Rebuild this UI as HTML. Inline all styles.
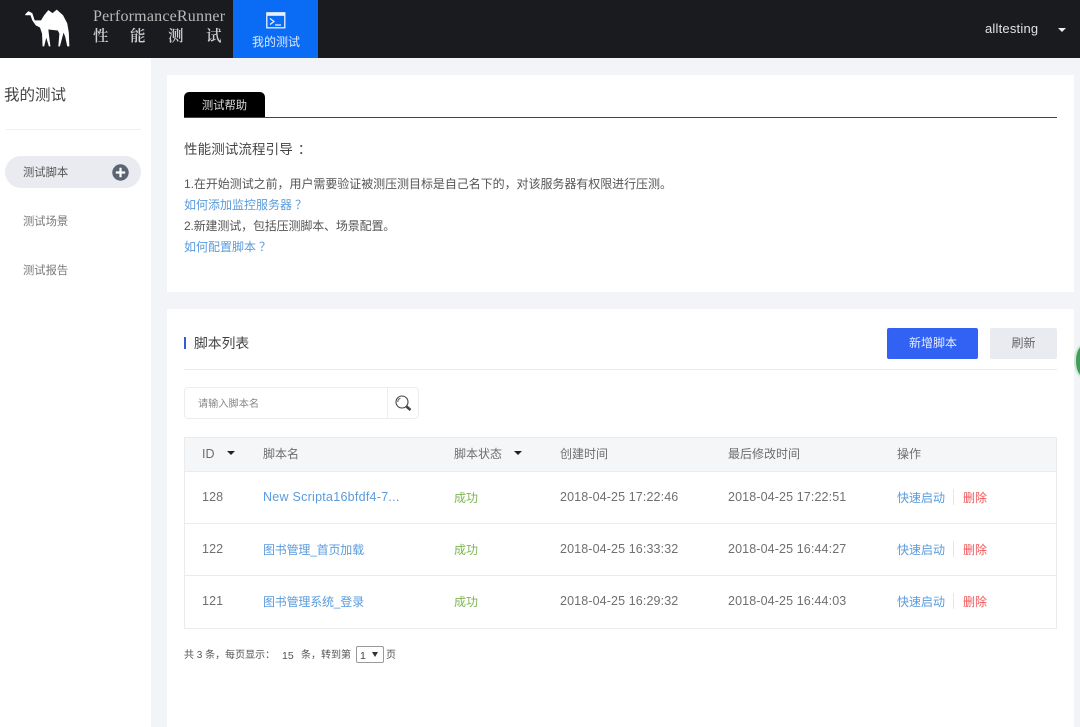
<!DOCTYPE html>
<html lang="zh"><head><meta charset="utf-8"><title>PerformanceRunner</title>
<style>
html,body{margin:0;padding:0;width:1080px;height:727px;overflow:hidden;background:#f3f4f7}
body{position:relative;font-family:"Liberation Sans","Noto Sans CJK SC",sans-serif;color:#555;font-size:12px;filter:blur(.3px)}
.a{position:absolute;white-space:nowrap}
.t{line-height:16px;height:16px}
.lnk{color:#5a9bdc}
.g{color:#7db552}
.r{color:#f0555a}
.hd{color:#6e6e6e}
.d{font-size:12.500px;color:#707070;letter-spacing:.12px}
.line{position:absolute;background:#eaebee;height:1px}
.tri{position:absolute;width:0;height:0;border-left:4px solid transparent;border-right:4px solid transparent;border-top:4px solid #222}
.s{font:600 15.500px/20px 'Liberation Serif','Noto Serif CJK SC',serif;color:#cfcfcf;top:27px}
.p{font-size:10px;line-height:14px;color:#555;top:649px}
</style></head><body>
<div class="a" style="left:0;top:0;width:1080px;height:58px;background:#191b1e"></div>
<svg class="a" style="left:20px;top:5px" width="63" height="47" viewBox="0 0 60 46" preserveAspectRatio="none"><path fill="#fff" d="M5 9 L8 6 L11.700 8 L14 15 L20 15 L23 10 L27 5 L31 8 L35 4.500 L41 10 L45 18 L46.500 27 L47 40.500 L45 40.500 L43 31 L41.500 27 L38 40.500 L36.500 40.500 L37.500 28 L36 25 L27 24 L28 33 L29 40.500 L27.500 40.500 L25 32 L23 40.500 L21.500 40.500 L21 28 L19 22 L15 20 L11.700 15 L10 10 L5 10 Z"/></svg>
<div class="a" style="left:93px;top:8px;font:16px/18px 'Liberation Serif','Noto Serif CJK SC',serif;color:#b9b9b9;letter-spacing:.2px">PerformanceRunner</div>
<div class="a s" style="left:93px">性</div>
<div class="a s" style="left:130px">能</div>
<div class="a s" style="left:168px">测</div>
<div class="a s" style="left:206px">试</div>
<div class="a" style="left:233px;top:0;width:85px;height:58px;background:#0a6cf5"></div>
<svg class="a" style="left:266px;top:12px" width="20" height="17" viewBox="0 0 20 17"><rect x=".8" y=".8" width="18" height="15" fill="none" stroke="#e8f1ff" stroke-width="1.300"/><rect x=".8" y=".8" width="18" height="3" fill="#e8f1ff"/><path d="M4 6.500 L8 9.500 L4 12.500 M9 13 H15" fill="none" stroke="#e8f1ff" stroke-width="1.200"/></svg>
<div class="a t" style="left:252px;top:34px;color:#dce9ff;font-size:12px">我的测试</div>
<div class="a" style="left:985px;top:21px;font-size:13px;line-height:16px;color:#e2e2e2;letter-spacing:.2px">alltesting</div>
<div class="tri" style="left:1058px;top:28px;border-top-color:#eee"></div>

<div class="a" style="left:0;top:58px;width:151px;height:669px;background:#fff"></div>
<div class="a" style="left:4px;top:87px;font-size:15.500px;line-height:18px;color:#444">我的测试</div>
<div class="line" style="left:6px;top:129px;width:135px;background:#eeeff1"></div>
<div class="a" style="left:5px;top:156px;width:136px;height:32px;border-radius:16px;background:#e9ebf1"></div>
<div class="a t" style="left:23px;top:165px;color:#555;font-size:11.300px">测试脚本</div>
<svg class="a" style="left:112px;top:164px" width="17" height="17" viewBox="0 0 17 17"><circle cx="8.500" cy="8.500" r="8.200" fill="#5b6472"/><path d="M8.500 3.800 V13.200 M3.800 8.500 H13.200" stroke="#fff" stroke-width="2.200"/></svg>
<div class="a t" style="left:23px;top:214px;color:#777;font-size:11.300px">测试场景</div>
<div class="a t" style="left:23px;top:263px;color:#777;font-size:11.300px">测试报告</div>

<div class="a" style="left:167px;top:75px;width:907px;height:217px;background:#fff"></div>
<div class="a" style="left:184px;top:92px;width:81px;height:26px;background:#000;border-radius:5px 5px 0 0;color:#ddd;font-size:11.300px;line-height:28px;text-align:center">测试帮助</div>
<div class="a" style="left:184px;top:117px;width:873px;height:1px;background:#444"></div>
<div class="a" style="left:184px;top:141px;font-size:13.500px;line-height:17px;color:#444;letter-spacing:.1px">性能测试流程引导<span style="margin-left:5px">：</span></div>
<div class="a t" style="left:184px;top:176px;color:#555;letter-spacing:-.05px">1.在开始测试之前，用户需要验证被测压测目标是自己名下的，对该服务器有权限进行压测。</div>
<div class="a t lnk" style="left:184px;top:197px">如何添加监控服务器<span style="margin-left:3px">？</span></div>
<div class="a t" style="left:184px;top:218px;color:#555;letter-spacing:-.15px">2.新建测试，包括压测脚本、场景配置。</div>
<div class="a t lnk" style="left:184px;top:239px">如何配置脚本<span style="margin-left:3px">？</span></div>

<div class="a" style="left:167px;top:309px;width:907px;height:418px;background:#fff"></div>
<div class="a" style="left:184px;top:337px;width:2px;height:12px;background:#3a5bd0"></div>
<div class="a" style="left:194px;top:335px;font-size:13.800px;line-height:17px;color:#444">脚本列表</div>
<div class="a" style="left:887px;top:328px;width:91px;height:31px;background:#3162f4;border-radius:2px;color:#e6ecff;text-align:center;line-height:31px;text-indent:1px">新增脚本</div>
<div class="a" style="left:990px;top:328px;width:67px;height:31px;background:#e9ebf1;border-radius:2px;color:#666;text-align:center;line-height:31px">刷新</div>
<div class="line" style="left:184px;top:369px;width:873px"></div>
<div class="a" style="left:1076px;top:346px;width:14px;height:30px;border-radius:50%;background:#3f9e5b;box-shadow:0 0 0 2px #cfe6d6"></div>

<div class="a" style="left:184px;top:387px;width:233px;height:30px;border:1px solid #eceded;border-radius:4px;background:#fff"></div>
<div class="a" style="left:387px;top:388px;width:1px;height:30px;background:#eceded"></div>
<div class="a" style="left:198px;top:398px;font-size:10.200px;line-height:13px;color:#888">请输入脚本名</div>
<svg class="a" style="left:393px;top:393px" width="20" height="20" viewBox="0 0 20 20"><circle cx="9" cy="9" r="6" fill="none" stroke="#444" stroke-width="1.100"/><path d="M4.800 9 A4 4 0 0 1 7.500 5.200" fill="none" stroke="#555" stroke-width="1"/><path d="M13.500 13.500 L17.500 17" stroke="#444" stroke-width="2.600"/></svg>

<div class="a" style="left:184px;top:437px;width:871px;height:190px;border:1px solid #eaebee;background:#fff"></div>
<div class="a" style="left:185px;top:438px;width:871px;height:33px;background:#f5f6f8;border-bottom:1px solid #eaebee"></div>
<div class="line" style="left:185px;top:523px;width:871px"></div>
<div class="line" style="left:185px;top:575px;width:871px"></div>

<div class="a t hd" style="left:202px;top:446px;font-size:12.500px">ID</div><div class="tri" style="left:227px;top:451px"></div>
<div class="a t hd" style="left:263px;top:446px">脚本名</div>
<div class="a t hd" style="left:454px;top:446px">脚本状态</div><div class="tri" style="left:514px;top:451px"></div>
<div class="a t hd" style="left:560px;top:446px">创建时间</div>
<div class="a t hd" style="left:728px;top:446px">最后修改时间</div>
<div class="a t hd" style="left:897px;top:446px">操作</div>

<div class="a t d" style="left:202px;top:489px">128</div>
<div class="a t lnk" style="left:263px;top:489px;font-size:12.500px;letter-spacing:.26px">New Scripta16bfdf4-7...</div>
<div class="a t g" style="left:454px;top:490px">成功</div>
<div class="a t d" style="left:560px;top:489px">2018-04-25 17:22:46</div>
<div class="a t d" style="left:728px;top:489px">2018-04-25 17:22:51</div>
<div class="a t lnk" style="left:897px;top:490px">快速启动</div>
<div class="a" style="left:953px;top:489px;width:1px;height:16px;background:#e6e6e6"></div>
<div class="a t r" style="left:963px;top:490px">删除</div>

<div class="a t d" style="left:202px;top:541px">122</div>
<div class="a t lnk" style="left:263px;top:542px;letter-spacing:-.2px">图书管理_首页加载</div>
<div class="a t g" style="left:454px;top:542px">成功</div>
<div class="a t d" style="left:560px;top:541px">2018-04-25 16:33:32</div>
<div class="a t d" style="left:728px;top:541px">2018-04-25 16:44:27</div>
<div class="a t lnk" style="left:897px;top:542px">快速启动</div>
<div class="a" style="left:953px;top:541px;width:1px;height:16px;background:#e6e6e6"></div>
<div class="a t r" style="left:963px;top:542px">删除</div>

<div class="a t d" style="left:202px;top:593px">121</div>
<div class="a t lnk" style="left:263px;top:594px;letter-spacing:-.2px">图书管理系统_登录</div>
<div class="a t g" style="left:454px;top:594px">成功</div>
<div class="a t d" style="left:560px;top:593px">2018-04-25 16:29:32</div>
<div class="a t d" style="left:728px;top:593px">2018-04-25 16:44:03</div>
<div class="a t lnk" style="left:897px;top:594px">快速启动</div>
<div class="a" style="left:953px;top:593px;width:1px;height:16px;background:#e6e6e6"></div>
<div class="a t r" style="left:963px;top:594px">删除</div>

<div class="a p" style="left:184px">共 3 条，每页显示：</div>
<div class="a p" style="left:282px;font-size:10.500px">15</div>
<div class="a p" style="left:301px">条，转到第</div>
<div class="a" style="left:356px;top:646px;width:26px;height:15px;border:1px solid #999;border-radius:2px;background:#fff"></div>
<div class="a p" style="left:360px;font-size:10.500px;color:#444">1</div>
<div class="tri" style="left:372px;top:652px;border-left-width:3px;border-right-width:3px;border-top-width:5px;border-top-color:#333"></div>
<div class="a p" style="left:386px">页</div>
</body></html>
